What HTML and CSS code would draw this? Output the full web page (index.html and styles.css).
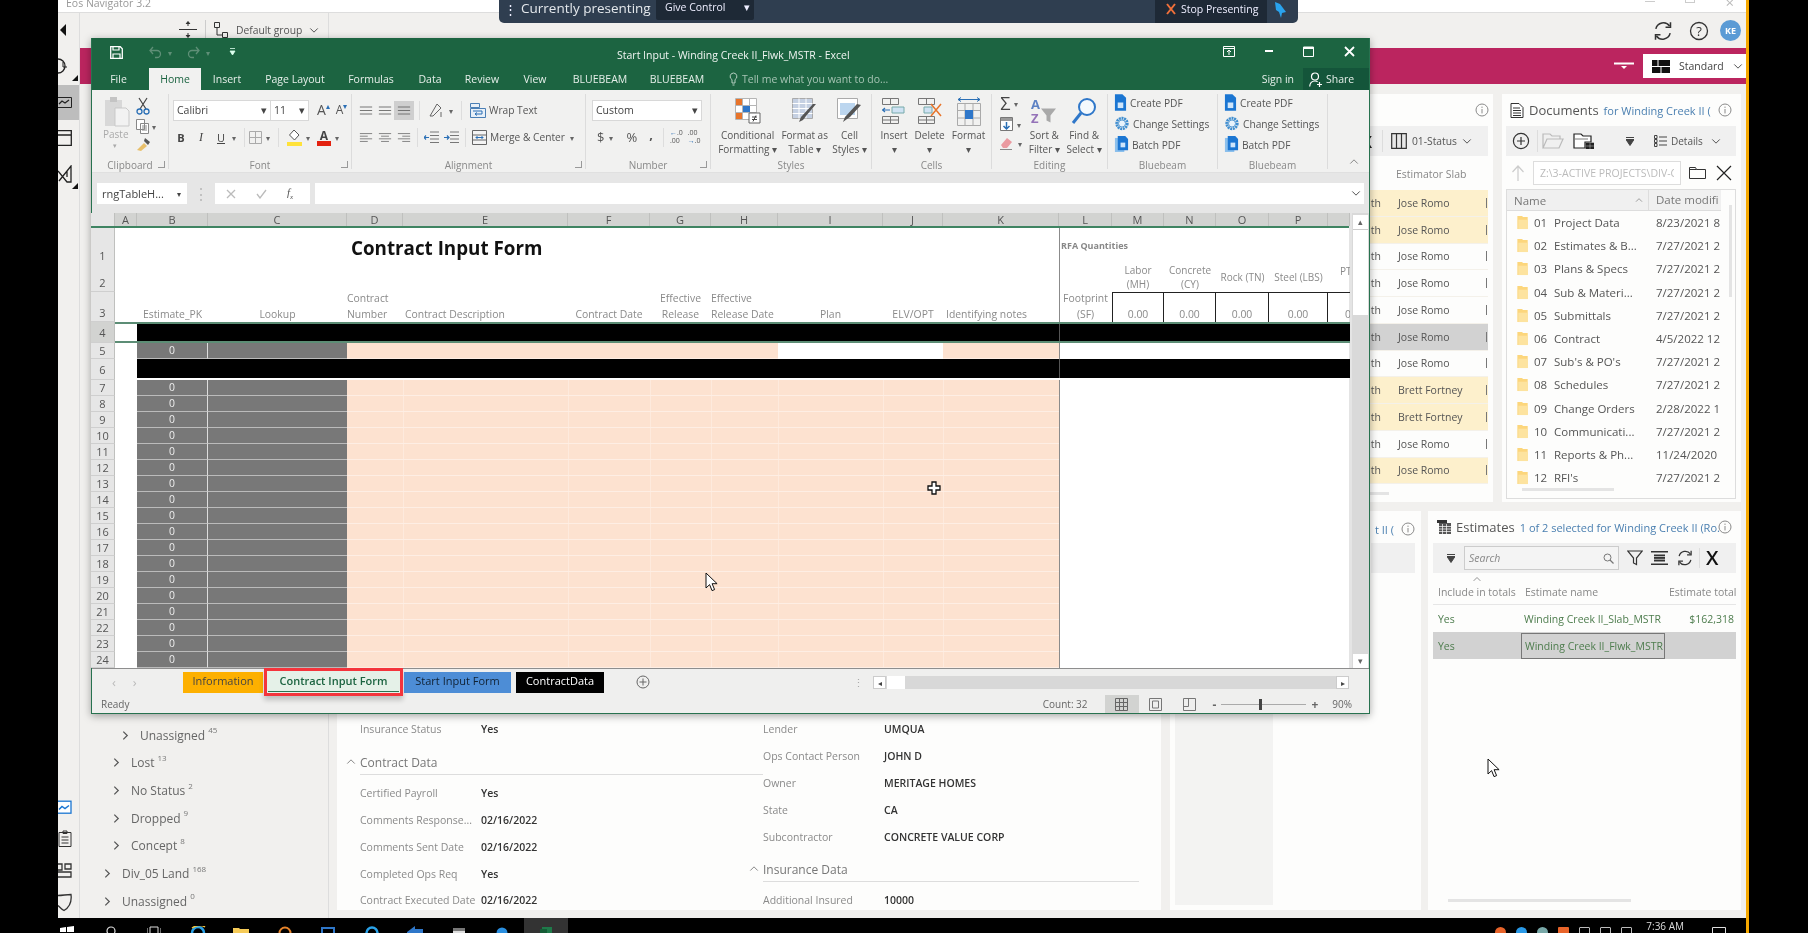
FILE: index.html
```html
<!doctype html>
<html lang="en">
<head>
<meta charset="utf-8">
<title>Eos Navigator 3.2</title>
<link rel="stylesheet" href="styles.css">
</head>
<body>
<svg class="defs" width="0" height="0">
  <symbol id="i-info" viewBox="0 0 14 14"><circle cx="7" cy="7" r="6" fill="none" stroke="#8a8a8a"/><path d="M7 6v4.4M7 3.6v1.3" stroke="#8a8a8a" fill="none"/></symbol>
  <symbol id="i-down" viewBox="0 0 12 8"><path d="M1.5 1.5 6 6l4.5-4.5" fill="none" stroke="#555" stroke-width="1.2"/></symbol>
  <symbol id="i-right" viewBox="0 0 8 12"><path d="M1.5 1.5 6 6l-4.5 4.5" fill="none" stroke="#555" stroke-width="1.4"/></symbol>
  <symbol id="i-up" viewBox="0 0 12 8"><path d="M1.5 6.5 6 2l4.5 4.5" fill="none" stroke="#888" stroke-width="1.2"/></symbol>
  <symbol id="i-folder" viewBox="0 0 12 16"><path d="M0 1h5l1 1h5v13H0z" fill="#fcd67c"/><path d="M1 5h10v10H1z" fill="#fde39f"/></symbol>
  <symbol id="i-pdf" viewBox="0 0 14 18"><path d="M1 0h8l4 4v14H1z" fill="#1b76d2"/><rect x="4" y="9" width="6" height="6" fill="#cfe6fb"/></symbol>
  <symbol id="i-gear" viewBox="0 0 18 18"><circle cx="9" cy="9" r="6" fill="none" stroke="#3f8ed0" stroke-width="3" stroke-dasharray="2.2 .8"/><circle cx="9" cy="9" r="4" fill="#e9f3fb" stroke="#3f8ed0"/></symbol>
  <symbol id="i-batch" viewBox="0 0 16 18"><rect x="1" y="2" width="10" height="15" fill="#8cc0ec"/><path d="M4 0h8l3 3v12H4z" fill="#1b76d2"/><rect x="7" y="7" width="5" height="5" fill="#cfe6fb"/></symbol>
  <symbol id="i-lines" viewBox="0 0 16 12"><path d="M1 2h14M1 6h14M1 10h14" stroke="#666" fill="none"/></symbol>
  <symbol id="i-lines-l" viewBox="0 0 16 12"><path d="M1 1.500h14M1 4.500h9M1 7.500h14M1 10.500h9" stroke="#777" fill="none"/></symbol>
  <symbol id="i-lines-c" viewBox="0 0 16 12"><path d="M1 1.500h14M3.500 4.500h9M1 7.500h14M3.500 10.500h9" stroke="#777" fill="none"/></symbol>
  <symbol id="i-lines-r" viewBox="0 0 16 12"><path d="M1 1.500h14M6 4.500h9M1 7.500h14M6 10.500h9" stroke="#777" fill="none"/></symbol>
  <symbol id="i-refresh" viewBox="0 0 20 20"><path d="M3.500 8A7 7 0 0 1 16 5.500M16.500 12A7 7 0 0 1 4 14.500" fill="none" stroke="#333" stroke-width="1.4"/><path d="M16.800 2v4.500h-4.500M3.200 18v-4.500h4.500" fill="none" stroke="#333" stroke-width="1.4"/></symbol>
  <symbol id="i-arrow" viewBox="0 0 14 21"><path d="M1 1v15l3.600-3.400 2.400 6 2.600-1-2.500-5.900h5z" fill="#fff" stroke="#111"/></symbol>
  <symbol id="i-tri" viewBox="0 0 6 6"><path d="M6 0v6H0z" fill="#111"/></symbol>
</svg>

<div class="screen">
  <div class="app">
    <header class="title-row">
      <span class="app-name">Eos Navigator 3.2</span>
      <span class="win-btns"><i></i><i class="sq"></i><b>×</b></span>
    </header>
    <div class="shell">
      <nav class="rail">
        <div class="rail-top">
          <svg class="rail-back" width="6" height="12" viewBox="0 0 6 12"><path d="M6 0v12L0 6z" fill="#111"/></svg>
          <svg class="r-clock" width="14" height="18" viewBox="0 0 14 18"><path d="M0 2a7 7 0 1 1 0 14" fill="none" stroke="#222" stroke-width="1.300"/><path d="M5 5v5h4" fill="none" stroke="#222"/></svg>
          <svg class="r-tri" width="6" height="6"><use href="#i-tri"/></svg>
          <div class="rail-on"><svg width="14" height="11" viewBox="0 0 14 11"><path d="M0 .5h13.500v10H0" fill="none" stroke="#222"/><path d="M1 7l3-3 3 2 4-3" fill="none" stroke="#222" stroke-width="1.300"/></svg></div>
          <svg class="r-win" width="14" height="16" viewBox="0 0 14 16"><path d="M0 .7h13.300v14.600H0M0 5h13" fill="none" stroke="#222" stroke-width="1.300"/></svg>
          <svg class="r-rule" width="14" height="18" viewBox="0 0 14 18"><path d="M0 6l9 11h4V1L1 16M9 6v6" fill="none" stroke="#222" stroke-width="1.300"/></svg>
          <svg class="r-tri" width="6" height="6"><use href="#i-tri"/></svg>
        </div>
        <div class="rail-bottom">
          <svg width="14" height="15" viewBox="0 0 14 14"><rect x="-1" y=".7" width="14" height="12" fill="#fff" stroke="#1b76d2" stroke-width="1.300"/><path d="M1 9l3-3 3 2 4-3" fill="none" stroke="#1b76d2" stroke-width="1.500"/></svg>
          <svg width="14" height="19" viewBox="0 0 14 18"><path d="M1 3h12v14H1zM5 1.500h4V4H5zM3.500 7.500h7M3.500 10.500h7M3.500 13.500h7" fill="none" stroke="#333"/></svg>
          <svg width="14" height="16" viewBox="0 0 14 16"><path d="M0 1h4v6H0M7 1h6v5H7zM0 9h13v5H0" fill="none" stroke="#333" stroke-width="1.300"/></svg>
          <svg width="14" height="19" viewBox="0 0 14 18"><path d="M0 2c5 0 8-1 13-1 1 8-2 13-7 16-2-1-4-3-6-5" fill="none" stroke="#333" stroke-width="1.300"/></svg>
        </div>
      </nav>

      <div class="content">
        <div class="top-bar">
          <div class="top-left">
            <svg width="20" height="22" viewBox="0 0 20 22"><path d="M1 10.500h18" stroke="#333"/><path d="M10 3v4M8 5l2-2.500L12 5M10 14v4M8 16l2 2.500 2-2.500" fill="#333" stroke="#333"/></svg>
            <span class="sep"></span>
            <svg width="16" height="18" viewBox="0 0 16 18"><path d="M1.500 1.500h5v5h-5zM9.500 11.500h5v5h-5zM4 6.500v7.500h5.500" fill="none" stroke="#333"/></svg>
            <span class="grp-name">Default group</span>
            <svg width="10" height="7"><use href="#i-down"/></svg>
          </div>
          <div class="top-right">
            <svg width="22" height="22"><use href="#i-refresh"/></svg>
            <svg width="20" height="20" viewBox="0 0 20 20"><circle cx="10" cy="10" r="8.500" fill="none" stroke="#333" stroke-width="1.300"/><text x="10" y="14.500" class="qmark">?</text></svg>
            <span class="avatar">KE</span>
          </div>
        </div>
        <div class="magenta">
          <svg width="20" height="8" viewBox="0 0 20 8"><path d="M0 1.500h20" stroke="#fff" stroke-width="2"/><path d="M7 4h6L10 7z" fill="#fff"/></svg>
          <div class="std-box">
            <svg width="18" height="13" viewBox="0 0 18 13"><path d="M0 0h5.500v6H0zM6.500 0H18v6H6.500zM0 7h8.500v6H0zM9.500 7H18v6H9.500z" fill="#111"/></svg>
            <span>Standard</span>
            <svg width="10" height="7"><use href="#i-down"/></svg>
          </div>
        </div>

        <div class="body">
          <aside class="tree">
            <div class="tree-row lvl3"><svg width="7" height="11"><use href="#i-right"/></svg><span>Unassigned</span><sup>45</sup></div>
            <div class="tree-row lvl2"><svg width="7" height="11"><use href="#i-right"/></svg><span>Lost</span><sup>13</sup></div>
            <div class="tree-row lvl2"><svg width="7" height="11"><use href="#i-right"/></svg><span>No Status</span><sup>2</sup></div>
            <div class="tree-row lvl2"><svg width="7" height="11"><use href="#i-right"/></svg><span>Dropped</span><sup>9</sup></div>
            <div class="tree-row lvl2"><svg width="7" height="11"><use href="#i-right"/></svg><span>Concept</span><sup>8</sup></div>
            <div class="tree-row lvl1"><svg width="7" height="11"><use href="#i-right"/></svg><span>Div_05 Land</span><sup>168</sup></div>
            <div class="tree-row lvl1"><svg width="7" height="11"><use href="#i-right"/></svg><span>Unassigned</span><sup>0</sup></div>
          </aside>

          <main class="details">
            <section class="det-col">
              <div class="kv"><span>Insurance Status</span><b>Yes</b></div>
              <h3 class="sect"><svg width="10" height="7"><use href="#i-up"/></svg>Contract Data</h3>
              <div class="kv"><span>Certified Payroll</span><b>Yes</b></div>
              <div class="kv"><span>Comments Response...</span><b>02/16/2022</b></div>
              <div class="kv"><span>Comments Sent Date</span><b>02/16/2022</b></div>
              <div class="kv"><span>Completed Ops Req</span><b>Yes</b></div>
              <div class="kv"><span>Contract Executed Date</span><b>02/16/2022</b></div>
            </section>
            <section class="det-col det-right">
              <div class="kv"><span>Lender</span><b>UMQUA</b></div>
              <div class="kv"><span>Ops Contact Person</span><b>JOHN D</b></div>
              <div class="kv"><span>Owner</span><b>MERITAGE HOMES</b></div>
              <div class="kv"><span>State</span><b>CA</b></div>
              <div class="kv"><span>Subcontractor</span><b>CONCRETE VALUE CORP</b></div>
              <h3 class="sect"><svg width="10" height="7"><use href="#i-up"/></svg>Insurance Data</h3>
              <div class="kv"><span>Additional Insured</span><b>10000</b></div>
            </section>
          </main>

          <div class="right">
            <div class="right-top">
              <section class="panel status">
                <div class="status-head"><svg width="14" height="14"><use href="#i-info"/></svg></div>
                <div class="status-tools">
                  <span class="x-mark">X</span><span class="sep"></span>
                  <svg width="16" height="16" viewBox="0 0 16 16"><path d="M.7.7h14.600v14.600H.7zM5.500.7v14.600M10.500.7v14.600" fill="#e8e8e8" stroke="#333" stroke-width="1.200"/></svg>
                  <span>01-Status</span>
                  <svg width="10" height="7"><use href="#i-down"/></svg>
                </div>
                <div class="status-cols"><span>Estimator Slab</span></div>
                <div class="srow hi"><i>Smith</i><span>Jose Romo</span></div>
                <div class="srow hi"><i>Smith</i><span>Jose Romo</span></div>
                <div class="srow"><i>Smith</i><span>Jose Romo</span></div>
                <div class="srow"><i>Smith</i><span>Jose Romo</span></div>
                <div class="srow"><i>Smith</i><span>Jose Romo</span></div>
                <div class="srow picked"><i>Smith</i><span>Jose Romo</span></div>
                <div class="srow"><i>Smith</i><span>Jose Romo</span></div>
                <div class="srow hi"><i>Smith</i><span>Brett Fortney</span></div>
                <div class="srow hi"><i>Smith</i><span>Brett Fortney</span></div>
                <div class="srow"><i>Smith</i><span>Jose Romo</span></div>
                <div class="srow hi"><i>Smith</i><span>Jose Romo</span></div>
                <div class="hbar status-bar"></div>
              </section>

              <section class="panel docs">
                <div class="p-head">
                  <svg width="14" height="15" viewBox="0 0 14 15"><path d="M1 .5h8l4 4v10H1z" fill="#fff" stroke="#333"/><path d="M3 5h7M3 7.500h8M3 10h8M3 12.500h8" stroke="#333"/></svg>
                  <h2>Documents</h2><em>for Winding Creek II (</em>
                  <svg class="p-info" width="14" height="14"><use href="#i-info"/></svg>
                </div>
                <div class="tools doc-tools">
                  <svg width="18" height="18" viewBox="0 0 18 18"><circle cx="9" cy="9" r="7.600" fill="none" stroke="#333" stroke-width="1.200"/><path d="M9 5v8M5 9h8" stroke="#333" stroke-width="1.200"/></svg>
                  <span class="sep"></span>
                  <svg class="t-folder" width="22" height="16" viewBox="0 0 22 16"><path d="M1 15V1h7l2 2h8v3M1 15l4-9h16l-4 9z" fill="none" stroke="#bbb" stroke-width="1.200"/></svg>
                  <svg class="t-open" width="21" height="16" viewBox="0 0 21 16"><path d="M1 15V1h7l2 2h8v6H12v6z" fill="#fff" stroke="#222" stroke-width="1.200"/><path d="M2 6h13M13 10h3.500v2.500H13zM17.500 10H21v2.500h-3.500zM13 13.500h3.500V16H13zM17.500 13.500H21V16h-3.500z" fill="#222" stroke="#222" stroke-width=".6"/></svg>
                  <svg class="t-tri" width="8" height="9" viewBox="0 0 8 9"><path d="M0 .5h8M0 2.500h8L4 8.500z" fill="#444" stroke="#444"/></svg>
                  <svg class="t-details" width="13" height="12" viewBox="0 0 13 12"><path d="M.5.500h2.500v3H.5zM.5 4.500h2.500v3H.5zM.5 8.500h2.500v3H.5zM5 2h8M5 6h8M5 10h8" fill="none" stroke="#444"/></svg>
                  <span class="t-label">Details</span>
                  <svg width="10" height="7"><use href="#i-down"/></svg>
                </div>
                <div class="path-row">
                  <svg width="14" height="16" viewBox="0 0 14 16"><path d="M7 16V1M1.500 7 7 1l5.500 6" fill="none" stroke="#ccc" stroke-width="1.200"/></svg>
                  <input class="path-input" value="Z:\3-ACTIVE PROJECTS\DIV-C" readonly>
                  <svg width="17" height="12" viewBox="0 0 17 12"><path d="M.5 11.500V.5h6l1 2h9v9zM.5 2.500h7" fill="none" stroke="#333"/></svg>
                  <svg width="16" height="16" viewBox="0 0 16 16"><path d="M1 1l14 14M15 1 1 15" stroke="#222" stroke-width="1.200"/></svg>
                </div>
                <div class="flist">
                  <div class="fhead"><span class="fname-h">Name</span><svg width="8" height="6"><use href="#i-up"/></svg><span class="fdate">Date modifi</span></div>
                  <div class="frow"><svg width="12" height="15"><use href="#i-folder"/></svg><b>01</b><span>Project Data</span><time>8/23/2021 8</time></div>
                  <div class="frow"><svg width="12" height="15"><use href="#i-folder"/></svg><b>02</b><span>Estimates &amp; B...</span><time>7/27/2021 2</time></div>
                  <div class="frow"><svg width="12" height="15"><use href="#i-folder"/></svg><b>03</b><span>Plans &amp; Specs</span><time>7/27/2021 2</time></div>
                  <div class="frow"><svg width="12" height="15"><use href="#i-folder"/></svg><b>04</b><span>Sub &amp; Materi...</span><time>7/27/2021 2</time></div>
                  <div class="frow"><svg width="12" height="15"><use href="#i-folder"/></svg><b>05</b><span>Submittals</span><time>7/27/2021 2</time></div>
                  <div class="frow"><svg width="12" height="15"><use href="#i-folder"/></svg><b>06</b><span>Contract</span><time>4/5/2022 12</time></div>
                  <div class="frow"><svg width="12" height="15"><use href="#i-folder"/></svg><b>07</b><span>Sub's &amp; PO's</span><time>7/27/2021 2</time></div>
                  <div class="frow"><svg width="12" height="15"><use href="#i-folder"/></svg><b>08</b><span>Schedules</span><time>7/27/2021 2</time></div>
                  <div class="frow"><svg width="12" height="15"><use href="#i-folder"/></svg><b>09</b><span>Change Orders</span><time>2/28/2022 1</time></div>
                  <div class="frow"><svg width="12" height="15"><use href="#i-folder"/></svg><b>10</b><span>Communicati...</span><time>7/27/2021 2</time></div>
                  <div class="frow"><svg width="12" height="15"><use href="#i-folder"/></svg><b>11</b><span>Reports &amp; Ph...</span><time>11/24/2020</time></div>
                  <div class="frow"><svg width="12" height="15"><use href="#i-folder"/></svg><b>12</b><span>RFI's</span><time>7/27/2021 2</time></div>
                  <div class="hbar doc-bar"></div>
                  <div class="vbar"></div>
                </div>
              </section>
            </div>

            <div class="right-bottom">
              <section class="panel mid">
                <div class="mid-box"></div>
                <div class="mid-side">
                  <div class="p-head"><em>t II (</em><svg class="p-info" width="14" height="14"><use href="#i-info"/></svg></div>
                  <div class="tools"></div>
                </div>
              </section>
              <section class="panel est">
                <div class="p-head">
                  <svg width="14" height="14" viewBox="0 0 14 14"><path d="M0 0h10v3H0z" fill="#333"/><path d="M2 3h12v11H2z" fill="#555"/><path d="M2 6.500h12M2 9h12M2 11.500h12M5.500 4v10M9.500 4v10" stroke="#fff" stroke-width=".7"/></svg>
                  <h2>Estimates</h2><em>1 of 2 selected for Winding Creek II (Ro.</em>
                  <svg class="p-info" width="14" height="14"><use href="#i-info"/></svg>
                </div>
                <div class="tools est-tools">
                  <svg class="t-tri2" width="8" height="9" viewBox="0 0 8 9"><path d="M0 .5h8M0 2.500h8L4 8.500z" fill="#444" stroke="#444"/></svg>
                  <label class="search"><input placeholder="Search"><svg width="11" height="11" viewBox="0 0 11 11"><circle cx="4.500" cy="4.500" r="3.500" fill="none" stroke="#777"/><path d="M7 7l3.500 3.500" stroke="#777" stroke-width="1.300"/></svg></label>
                  <svg width="16" height="16" viewBox="0 0 16 16"><path d="M.7 1h14.600L9.500 8v6.500l-3-1.500V8z" fill="none" stroke="#333" stroke-width="1.200"/></svg>
                  <svg width="17" height="14" viewBox="0 0 17 14"><path d="M0 .7h17M0 13.300h17" stroke="#333" stroke-width="1.400"/><path d="M3 3.500h11v7H3z" fill="#333"/><path d="M3 5.500h11M3 8.300h11" stroke="#eee" stroke-width=".7"/></svg>
                  <svg width="18" height="18"><use href="#i-refresh"/></svg>
                  <span class="sep"></span>
                  <span class="big-x">X</span>
                </div>
                <div class="est-head"><svg class="est-caret" width="10" height="6"><use href="#i-up"/></svg><span>Include in totals</span><span>Estimate name</span><span class="est-total">Estimate total</span></div>
                <div class="est-row"><span>Yes</span><span>Winding Creek II_Slab_MSTR</span><span class="est-total">$162,318</span></div>
                <div class="est-row on"><span>Yes</span><span class="cell-on">Winding Creek II_Flwk_MSTR</span></div>
                <div class="hbar est-bar"></div>
              </section>
            </div>
          </div>
        </div>
      </div>
    </div>

    <footer class="taskbar">
      <svg class="tk-win" width="14" height="14" viewBox="0 0 14 14"><path d="M0 2l6-1v5H0zM7 1l7-1v6H7z" fill="#fff"/></svg>
      <span class="tk"><svg width="10" height="10" viewBox="0 0 10 10"><circle cx="5" cy="5" r="4" fill="none" stroke="#ddd" stroke-width="1.200"/></svg></span>
      <span class="tk"><svg width="14" height="10" viewBox="0 0 14 10"><path d="M3 1h8v8H3zM0 2v6M14 2v6" fill="none" stroke="#ddd"/></svg></span>
      <span class="tk"><svg width="16" height="10" viewBox="0 0 16 10"><circle cx="8" cy="7" r="6" fill="none" stroke="#2aa2e8" stroke-width="2.500"/><path d="M2 2c4-3 10-3 13-1" fill="none" stroke="#f5c33c" stroke-width="1.500"/></svg></span>
      <span class="tk"><svg width="16" height="10" viewBox="0 0 16 10"><path d="M0 2h6l1 1h9v7H0z" fill="#f6cb58"/></svg></span>
      <span class="tk"><svg width="14" height="10" viewBox="0 0 14 10"><circle cx="7" cy="7" r="5.500" fill="none" stroke="#e8842a" stroke-width="2"/></svg></span>
      <span class="tk"><svg width="14" height="10" viewBox="0 0 14 10"><path d="M1 10V2h12v8" fill="none" stroke="#2f77c9" stroke-width="2"/></svg></span>
      <span class="tk"><svg width="14" height="10" viewBox="0 0 14 10"><circle cx="7" cy="7" r="5.500" fill="none" stroke="#2aa2e8" stroke-width="2.500"/></svg></span>
      <span class="tk"><svg width="16" height="10" viewBox="0 0 16 10"><path d="M0 6l8-6v3h8v7H0z" fill="#2f77c9"/></svg></span>
      <span class="tk"><svg width="14" height="10" viewBox="0 0 14 10"><path d="M1 2h12v8H1z" fill="#ddd"/><path d="M1 2h12v3H1z" fill="#777"/></svg></span>
      <span class="tk"><svg width="14" height="10" viewBox="0 0 14 10"><circle cx="7" cy="7" r="5.500" fill="#2a8fe0"/></svg></span>
      <span class="tk tk-on"><svg width="14" height="10" viewBox="0 0 14 10"><path d="M3 1h10v9H3z" fill="#1f7a4a"/><path d="M1 3h7v7H1z" fill="#155c36"/></svg></span>
      <span class="tray">
        <i class="dot orange"></i><i class="dot blue"></i><i class="dot teal"></i><i class="dot box"></i><i class="dot gray"></i><i class="dot gray"></i><i class="dot gray"></i>
        <time>7:36 AM</time>
        <svg width="14" height="8" viewBox="0 0 14 8"><path d="M.5 8V.5h13V8" fill="none" stroke="#ddd"/></svg>
      </span>
    </footer>
  </div>

  <!-- presenter strip over the shared desktop -->
  <div class="presenting">
    <span class="grip">⋮</span>
    <span class="pres-text">Currently presenting</span>
    <span class="give">Give Control<i>▾</i></span>
    <span class="stop"><svg width="10" height="12" viewBox="0 0 10 12"><path d="M1 1l8 10M9 1 1 11" stroke="#f0703a" stroke-width="2"/></svg>Stop Presenting</span>
    <svg class="pin" width="14" height="16" viewBox="0 0 14 16"><path d="M1 0l5 2 6 8-4 1-1 5-2-6-3-2z" fill="#29a3ee"/></svg>
  </div>

  <!-- Excel window -->
  <div class="xl">
    <div class="xl-title">
      <div class="qat">
        <svg width="13" height="13" viewBox="0 0 13 13"><path d="M.7.7h9.600l2 2v9.600H.7z" fill="none" stroke="#fff" stroke-width="1.300"/><path d="M3 1v3h6V1M3 12V8h7v4" fill="none" stroke="#fff" stroke-width="1.200"/></svg>
        <svg class="dim" width="13" height="13" viewBox="0 0 13 13"><path d="M4 1 1 4.500 4 8M1 4.500h7a3.500 3.500 0 0 1 0 7H6" fill="none" stroke="#5f8f77" stroke-width="1.300"/></svg>
        <span class="dim-caret">▾</span>
        <svg class="dim" width="13" height="13" viewBox="0 0 13 13"><path d="M9 1l3 3.500L9 8M12 4.500H5a3.500 3.500 0 0 0 0 7h2" fill="none" stroke="#5f8f77" stroke-width="1.300"/></svg>
        <span class="dim-caret">▾</span>
        <svg class="cust" width="7" height="8" viewBox="0 0 7 8"><path d="M1 .5h5M1 3h5L3.500 7z" fill="#dfe" stroke="#dfe" stroke-width=".8"/></svg>
      </div>
      <span class="xl-name">Start Input - Winding Creek II_Flwk_MSTR - Excel</span>
      <div class="xl-win">
        <svg width="12" height="11" viewBox="0 0 12 11"><path d="M.5.500h11v10H.5zM.5 2.500h11" fill="none" stroke="#fff"/><path d="M6 9V5M4 6l2-2 2 2" fill="none" stroke="#fff"/></svg>
        <svg width="8" height="3"><rect width="8" height="2" fill="#fff"/></svg>
        <svg width="11" height="11" viewBox="0 0 11 11"><path d="M.5 1h10v9.500H.5z" fill="none" stroke="#fff"/><path d="M0 1h11v2H0z" fill="#fff"/></svg>
        <svg width="11" height="11" viewBox="0 0 11 11"><path d="M1 1l9 9M10 1l-9 9" stroke="#fff" stroke-width="1.800"/></svg>
      </div>
    </div>
    <div class="xl-tabs">
      <span class="t-file">File</span><span class="on">Home</span><span>Insert</span><span>Page Layout</span><span>Formulas</span><span>Data</span><span>Review</span><span>View</span><span>BLUEBEAM</span><span>BLUEBEAM</span>
      <span class="tell"><svg width="9" height="15" viewBox="0 0 9 15"><path d="M4.500 1A3.500 3.500 0 0 0 3 7.600V11h3V7.600A3.500 3.500 0 0 0 4.500 1zM3.500 13h2" fill="none" stroke="#b7d1c3"/></svg>Tell me what you want to do...</span>
      <span class="signin">Sign in</span>
      <span class="share"><svg width="13" height="15" viewBox="0 0 13 15"><circle cx="6" cy="4.500" r="3.500" fill="none" stroke="#fff" stroke-width="1.200"/><path d="M.7 14.500C1 10 3 9 6 9c1 0 2 .2 2.600.7M10.500 10v5M8 12.500h5" fill="none" stroke="#fff" stroke-width="1.200"/></svg>Share</span>
    </div>

    <div class="ribbon">
      <div class="rg clip">
        <div class="rb">
          <div class="paste">
            <svg width="26" height="32" viewBox="0 0 26 32"><path d="M1 4h17v26H1z" fill="#d8d8d8"/><path d="M6 1h7v5H6z" fill="#c4c4c4"/><path d="M11 12h11l3 3v15H11z" fill="#f2f2f2" stroke="#c9c9c9"/></svg>
            <span>Paste</span><i>▾</i>
          </div>
          <div class="clip-col">
            <svg width="14" height="18" viewBox="0 0 14 18"><path d="M3 1l7 11M11 1 4 12" stroke="#444" stroke-width="1.200"/><circle cx="3.500" cy="14.500" r="2.500" fill="none" stroke="#2a6fb5" stroke-width="1.300"/><circle cx="10.500" cy="14.500" r="2.500" fill="none" stroke="#2a6fb5" stroke-width="1.300"/></svg>
            <div><svg width="13" height="15" viewBox="0 0 13 15"><path d="M.5.500h8v10h-8zM4.500 4.500h8v10h-8zM6 7h5M6 9h5M6 11h5" fill="#fff" stroke="#888"/></svg><i class="car">▾</i></div>
            <svg width="15" height="15" viewBox="0 0 15 15"><path d="M1 13l7-7 3 3-6 5z" fill="#e8bf6a"/><path d="M9 1l5 4-2 3-4-4z" fill="#555"/></svg>
          </div>
        </div>
        <div class="rl">Clipboard<span class="launch"></span></div>
      </div>

      <div class="rg font-g">
        <div class="rb col">
          <div class="rrow">
            <span class="sel fname">Calibri<i>▾</i></span><span class="sel fsize">11<i>▾</i></span>
            <span class="ga">A<sup>▴</sup></span><span class="ga small">A<sup>▾</sup></span>
          </div>
          <div class="rrow row-b">
            <b class="fbtn">B</b><i class="fbtn it">I</i><u class="fbtn">U</u><i class="car">▾</i><span class="rsep"></span>
            <svg class="b-grid" width="13" height="13" viewBox="0 0 13 13"><path d="M.5.500h12v12H.5zM6.500.5v12M.5 6.500h12" fill="none" stroke="#aaa"/></svg><i class="car">▾</i><span class="rsep"></span>
            <svg width="15" height="17" viewBox="0 0 15 17"><path d="M7 1l5 5-4.500 5L2.500 6z" fill="#fff" stroke="#555"/><path d="M0 13h15v4H0z" fill="#ffe23a"/></svg><i class="car">▾</i>
            <svg class="fcol" width="14" height="17" viewBox="0 0 14 17"><text x="7" y="11" class="a-red">A</text><path d="M0 12h14v5H0z" fill="#e3210f"/></svg><i class="car">▾</i>
          </div>
        </div>
        <div class="rl">Font<span class="launch"></span></div>
      </div>

      <div class="rg align-g">
        <div class="rb col">
          <div class="rrow">
            <svg width="14" height="11"><use href="#i-lines"/></svg>
            <svg width="14" height="11"><use href="#i-lines"/></svg>
            <span class="a-on"><svg width="14" height="11"><use href="#i-lines"/></svg></span>
            <span class="rsep"></span>
            <svg width="16" height="16" viewBox="0 0 16 16"><path d="M2 14 9 2l4 4-8 8zM13 10v5" fill="none" stroke="#666"/></svg><i class="car">▾</i>
            <span class="rsep"></span>
            <span class="wrap"><svg width="16" height="15" viewBox="0 0 16 15"><path d="M.5.500h9v4h-9zM.5 5.500h15v9H.5z" fill="#e8f0f8" stroke="#4b7fb5"/><path d="M3 8h9v3H5M7 9.500 5 11l2 1.500" fill="none" stroke="#2a6fb5"/></svg>Wrap Text</span>
          </div>
          <div class="rrow row-b">
            <svg width="14" height="11"><use href="#i-lines-l"/></svg>
            <svg width="14" height="11"><use href="#i-lines-c"/></svg>
            <svg width="14" height="11"><use href="#i-lines-r"/></svg>
            <span class="rsep"></span>
            <svg width="15" height="13" viewBox="0 0 15 13"><path d="M6 1h9M6 4.500h9M6 8h9M6 11.500h9" stroke="#777"/><path d="M0 6.500h5M2 4.500l-2 2 2 2" fill="none" stroke="#2a6fb5" stroke-width="1.200"/></svg>
            <svg width="15" height="13" viewBox="0 0 15 13"><path d="M6 1h9M6 4.500h9M6 8h9M6 11.500h9" stroke="#777"/><path d="M0 6.500h5M3 4.500l2 2-2 2" fill="none" stroke="#2a6fb5" stroke-width="1.200"/></svg>
            <span class="rsep"></span>
            <span class="wrap"><svg width="15" height="15" viewBox="0 0 15 15"><path d="M.5.500h14v14H.5zM.5 5h14M.5 10h14" fill="#f4f4f4" stroke="#666"/><path d="M4 7.500h7M5.500 6 4 7.500 5.500 9M9.500 6 11 7.500 9.500 9" fill="none" stroke="#2a6fb5"/></svg>Merge &amp; Center</span><i class="car">▾</i>
          </div>
        </div>
        <div class="rl">Alignment<span class="launch"></span></div>
      </div>

      <div class="rg num-g">
        <div class="rb col">
          <div class="rrow"><span class="sel numfmt">Custom<i>▾</i></span></div>
          <div class="rrow row-b num-row">
            <span class="dollar">$</span><i class="car">▾</i><span class="pct">%</span><span class="comma">,</span><span class="rsep"></span>
            <span class="dec"><em>←</em>.0<br>.00</span><span class="dec">.00<br><em>→</em>.0</span>
          </div>
        </div>
        <div class="rl">Number<span class="launch"></span></div>
      </div>

      <div class="rg styles-g">
        <div class="rb big3">
          <div class="bigb"><svg width="26" height="26" viewBox="0 0 26 26"><path d="M.5.500h21v21H.5zM.5 7.500h21M.5 14.500h21M7.500.5v21M14.500.5v21" fill="#fff" stroke="#b5b5b5"/><path d="M1 1h6v6H1z" fill="#e8742a"/><path d="M8 8h7v6H8z" fill="#2f77c9"/><path d="M1 15h6v6H1z" fill="#e8742a"/><path d="M14 15h11v10H14z" fill="#fff" stroke="#666"/><path d="M17 19h5M17 21.500h5M21 17.500l-3 6" stroke="#444"/></svg><span>Conditional<br>Formatting <i>▾</i></span></div>
          <div class="bigb"><svg width="26" height="26" viewBox="0 0 26 26"><path d="M.5.500h20v20H.5z" fill="#c5d0e2" stroke="#aaa"/><path d="M.5 5.500h20M.5 10.500h20M.5 15.500h20M7 .5v20M14 .5v20" stroke="#fff"/><path d="M24 6l-10 12-3 4-4 2 2-5 12-13z" fill="#555"/></svg><span>Format as<br>Table <i>▾</i></span></div>
          <div class="bigb"><svg width="26" height="26" viewBox="0 0 26 26"><path d="M.5.500h20v20H.5z" fill="#fff" stroke="#aaa"/><path d="M3 5h15v12H3z" fill="#bcd6ef"/><path d="M24 7 13 19l-3 2-4 3 2-5 12-13z" fill="#555"/></svg><span>Cell<br>Styles <i>▾</i></span></div>
        </div>
        <div class="rl">Styles</div>
      </div>

      <div class="rg cells-g">
        <div class="rb big3">
          <div class="bigb"><svg width="24" height="26" viewBox="0 0 24 26"><path d="M.5.500h16v6H.5zM.5 18.500h16v7H.5zM8.500.5v6M8.500 18.500v7M.5 22h16" fill="none" stroke="#777"/><path d="M10 9h12v6H10z" fill="#cfe2f3" stroke="#7aa"/><path d="M0 12h8M3 10 .5 12 3 14" fill="none" stroke="#2a6fb5" stroke-width="1.200"/></svg><span>Insert<br><i>▾</i></span></div>
          <div class="bigb"><svg width="24" height="26" viewBox="0 0 24 26"><path d="M.5.500h16v6H.5zM.5 18.500h16v7H.5zM8.500.5v6M8.500 18.500v7M.5 22h16" fill="none" stroke="#777"/><path d="M6 9h8v6H6z" fill="#cfe2f3" stroke="#7aa"/><path d="M13 6l10 12M23 6 13 18" stroke="#e8742a" stroke-width="1.500"/></svg><span>Delete<br><i>▾</i></span></div>
          <div class="bigb"><svg width="24" height="30" viewBox="0 0 24 30"><path d="M1 3.500h22M1 3.500l3-2M1 3.500l3 2M23 3.500l-3-2M23 3.500l-3 2" fill="none" stroke="#2a6fb5"/><path d="M.5 7.500h23v22H.5zM.5 14.500h23M.5 22h23M8 7.500v22M16 7.500v22" fill="none" stroke="#aaa"/><path d="M8 14h8v9H8z" fill="#2f77c9"/></svg><span>Format<br><i>▾</i></span></div>
        </div>
        <div class="rl">Cells</div>
      </div>

      <div class="rg edit-g">
        <div class="rb big3">
          <div class="edit-col">
            <div><span class="sigma">Σ</span><i class="car">▾</i></div>
            <div><svg width="13" height="14" viewBox="0 0 13 14"><path d="M.5.500h12v13H.5z" fill="#fff" stroke="#777"/><path d="M1 1h11v3H1z" fill="#999"/><path d="M6.500 5v7M3.500 9l3 3 3-3" fill="none" stroke="#2a6fb5" stroke-width="1.500"/></svg><i class="car">▾</i></div>
            <div><svg width="14" height="13" viewBox="0 0 14 13"><path d="M1 8l6-7 5 4-5 6H3z" fill="#ea9aa0"/><path d="M0 12.500h12" stroke="#888"/></svg><i class="car">▾</i></div>
          </div>
          <div class="bigb"><svg width="26" height="27" viewBox="0 0 26 27"><text x="0" y="11" class="az a">A</text><text x="0" y="25" class="az z">Z</text><path d="M10 11h15l-5.500 7v7l-4-2v-5z" fill="#a9a9a9"/></svg><span>Sort &amp;<br>Filter <i>▾</i></span></div>
          <div class="bigb"><svg width="26" height="28" viewBox="0 0 26 28"><circle cx="16" cy="10" r="8" fill="#f4f9fd" stroke="#2f77c9" stroke-width="2"/><path d="M10 16 2 26" stroke="#2f77c9" stroke-width="3"/></svg><span>Find &amp;<br>Select <i>▾</i></span></div>
        </div>
        <div class="rl">Editing</div>
      </div>

      <div class="rg bb-g">
        <div class="rb col bb">
          <div><svg width="13" height="17"><use href="#i-pdf"/></svg>Create PDF</div>
          <div><svg width="16" height="17"><use href="#i-gear"/></svg>Change Settings</div>
          <div><svg width="15" height="17"><use href="#i-batch"/></svg>Batch PDF</div>
        </div>
        <div class="rl">Bluebeam</div>
      </div>
      <div class="rg bb-g">
        <div class="rb col bb">
          <div><svg width="13" height="17"><use href="#i-pdf"/></svg>Create PDF</div>
          <div><svg width="16" height="17"><use href="#i-gear"/></svg>Change Settings</div>
          <div><svg width="15" height="17"><use href="#i-batch"/></svg>Batch PDF</div>
        </div>
        <div class="rl">Bluebeam</div>
      </div>
      <svg class="collapse" width="10" height="7"><use href="#i-up"/></svg>
    </div>

    <div class="fbar">
      <span class="namebox">rngTableH...<i>▾</i></span>
      <span class="fdots">⋮</span>
      <span class="fxbox">
        <svg width="10" height="10" viewBox="0 0 10 10"><path d="M1 1l8 8M9 1 1 9" stroke="#bbb" stroke-width="1.300"/></svg>
        <svg width="11" height="10" viewBox="0 0 11 10"><path d="M1 5l3 4 6-8" fill="none" stroke="#bbb" stroke-width="1.300"/></svg>
        <em>f<sub>x</sub></em>
      </span>
      <span class="finput"><svg width="10" height="7"><use href="#i-down"/></svg></span>
    </div>

    <div class="sheet-wrap">
      <div class="sheet">
        <div class="colh">
          <span class="corner"></span>
          <span>A</span><span>B</span><span>C</span><span>D</span><span>E</span><span>F</span><span>G</span><span>H</span><span>I</span><span>J</span><span>K</span><span>L</span><span>M</span><span>N</span><span>O</span><span>P</span><span></span>
        </div>
        <div class="row r1"><span class="rh">1</span><span class="sheet-title">Contract Input Form</span><span class="rfa">RFA Quantities</span></div>
        <div class="row r2"><span class="rh">2</span>
          <span class="hc ll c-m">Labor<br>(MH)</span><span class="hc ll c-n">Concrete<br>(CY)</span><span class="hc ll c-o mid-t">Rock (TN)</span><span class="hc ll c-p mid-t">Steel (LBS)</span><span class="hc ll c-q">PT</span>
        </div>
        <div class="row r3"><span class="rh">3</span>
          <span class="hc c-b">Estimate_PK</span><span class="hc c-c">Lookup</span><span class="hc c-d left">Contract<br>Number</span><span class="hc c-e left">Contract Description</span><span class="hc c-f">Contract Date</span><span class="hc c-g">Effective<br>Release</span><span class="hc c-h left">Effective<br>Release Date</span><span class="hc c-i">Plan</span><span class="hc c-j">ELV/OPT</span><span class="hc c-k left">Identifying notes</span><span class="hc c-l">Footprint<br>(SF)</span>
          <span class="qty c-m">0.00</span><span class="qty c-n">0.00</span><span class="qty c-o">0.00</span><span class="qty c-p">0.00</span><span class="qty c-q">0.00</span>
        </div>
        <div class="row r4"><span class="rh on">4</span><span class="sel-row"><span class="black"></span></span></div>
        <div class="row r5"><span class="rh">5</span><span class="pk">0</span><span class="lk"></span><span class="peach p5a"></span><span class="peach p5b"></span><span class="vl"></span></div>
        <div class="row r6"><span class="rh">6</span><span class="black black6"></span></div>
        <div class="row"><span class="rh">7</span><span class="pk">0</span><span class="lk"></span><span class="peach pall"></span><span class="vl"></span></div>
        <div class="row"><span class="rh">8</span><span class="pk">0</span><span class="lk"></span><span class="peach pall"></span><span class="vl"></span></div>
        <div class="row"><span class="rh">9</span><span class="pk">0</span><span class="lk"></span><span class="peach pall"></span><span class="vl"></span></div>
        <div class="row"><span class="rh">10</span><span class="pk">0</span><span class="lk"></span><span class="peach pall"></span><span class="vl"></span></div>
        <div class="row"><span class="rh">11</span><span class="pk">0</span><span class="lk"></span><span class="peach pall"></span><span class="vl"></span></div>
        <div class="row"><span class="rh">12</span><span class="pk">0</span><span class="lk"></span><span class="peach pall"></span><span class="vl"></span></div>
        <div class="row"><span class="rh">13</span><span class="pk">0</span><span class="lk"></span><span class="peach pall"></span><span class="vl"></span></div>
        <div class="row"><span class="rh">14</span><span class="pk">0</span><span class="lk"></span><span class="peach pall"></span><span class="vl"></span></div>
        <div class="row"><span class="rh">15</span><span class="pk">0</span><span class="lk"></span><span class="peach pall"></span><span class="vl"></span></div>
        <div class="row"><span class="rh">16</span><span class="pk">0</span><span class="lk"></span><span class="peach pall"></span><span class="vl"></span></div>
        <div class="row"><span class="rh">17</span><span class="pk">0</span><span class="lk"></span><span class="peach pall"></span><span class="vl"></span></div>
        <div class="row"><span class="rh">18</span><span class="pk">0</span><span class="lk"></span><span class="peach pall"></span><span class="vl"></span></div>
        <div class="row"><span class="rh">19</span><span class="pk">0</span><span class="lk"></span><span class="peach pall"></span><span class="vl"></span></div>
        <div class="row"><span class="rh">20</span><span class="pk">0</span><span class="lk"></span><span class="peach pall"></span><span class="vl"></span></div>
        <div class="row"><span class="rh">21</span><span class="pk">0</span><span class="lk"></span><span class="peach pall"></span><span class="vl"></span></div>
        <div class="row"><span class="rh">22</span><span class="pk">0</span><span class="lk"></span><span class="peach pall"></span><span class="vl"></span></div>
        <div class="row"><span class="rh">23</span><span class="pk">0</span><span class="lk"></span><span class="peach pall"></span><span class="vl"></span></div>
        <div class="row"><span class="rh">24</span><span class="pk">0</span><span class="lk"></span><span class="peach pall"></span><span class="vl"></span></div>
      </div>
      <div class="vscroll"><span class="va">▴</span><span class="vthumb"></span><span class="vfill"></span><span class="va">▾</span></div>
    </div>

    <div class="sheet-tabs">
      <span class="nav-arrows">‹&nbsp;&nbsp;&nbsp;&nbsp;&nbsp;›</span>
      <span class="stab t-info">Information</span>
      <span class="stab t-cur">Contract Input Form</span>
      <span class="stab t-start">Start Input Form</span>
      <span class="stab t-data">ContractData</span>
      <svg class="t-add" width="14" height="14" viewBox="0 0 14 14"><circle cx="7" cy="7" r="6" fill="none" stroke="#666"/><path d="M7 3.500v7M3.500 7h7" stroke="#666"/></svg>
      <span class="hdots">⋮</span>
      <span class="hscroll"><span class="ha">◂</span><span class="hthumb"></span><span class="htrack"></span><span class="ha">▸</span></span>
    </div>
    <div class="xl-status">
      <span class="ready">Ready</span>
      <span class="count">Count: 32</span>
      <span class="view on"><svg width="13" height="13" viewBox="0 0 13 13"><path d="M.5.500h12v12H.5zM4.500.5v12M8.500.5v12M.5 4.500h12M.5 8.500h12" fill="none" stroke="#666"/></svg></span>
      <span class="view"><svg width="13" height="13" viewBox="0 0 13 13"><path d="M.5.500h12v12H.5zM3.500 3h6v7h-6z" fill="none" stroke="#777"/></svg></span>
      <span class="view"><svg width="13" height="13" viewBox="0 0 13 13"><path d="M.5.500h12v12H.5zM.5 8.500h5v-8" fill="none" stroke="#777"/></svg></span>
      <span class="zoom"><b>-</b><span class="zline"><i></i></span><b>+</b></span>
      <span class="pctz">90%</span>
    </div>
  </div>

  <div class="cur-arrow a1"><svg width="14" height="21"><use href="#i-arrow"/></svg></div>
  <div class="cur-arrow a2"><svg width="14" height="21"><use href="#i-arrow"/></svg></div>
  <svg class="cur-cross" width="14" height="14" viewBox="0 0 14 14"><path d="M5 1h4v4h4v4H9v4H5V9H1V5h4z" fill="#fff" stroke="#111" stroke-width="1.300"/></svg>
</div>
</body>
</html>
```

FILE: styles.css
```css
:root {
    --ui: "Open Sans", "Noto Sans", sans-serif;
    --green: #1c6441;
    --panel: #fdfdfc;
    --page: #f1f0ee;
    --cols: 24px 22px 71px 139px 56px 165px 82px 61px 67px 105px 60px 116px 53px 52px 52px 53px 59px 22px;
}

* {
    box-sizing: border-box;
}

html, body {
    margin: 0;
    padding: 0;
    background: #000;
}

.defs {
    position: absolute;
}

i {
    font-style: normal;
}

svg {
    flex: none;
    display: block;
}

.screen {
    position: relative;
    width: 1808px;
    height: 933px;
    overflow: hidden;
    background: #000;
    padding-left: 58px;
    font-family: var(--ui);
    color: #444;
    filter: blur(0.35px);
}

/* the app behind */
.app {
    width: 1691px;
    height: 933px;
    display: flex;
    flex-direction: column;
    background: var(--page);
    border-right: 3px solid #f6a800;
}

.shell {
    flex: 1;
    min-height: 0;
    display: flex;
}

.content {
    flex: 1;
    min-width: 0;
    display: flex;
    flex-direction: column;
}

.title-row {
    height: 13px;
    flex: none;
    background: #fff;
    border-bottom: 1px solid #ddd;
    display: flex;
    justify-content: space-between;
    overflow: hidden;
    font-size: 10.5px;
    color: #999;
    line-height: 6px;
    padding-left: 8px;
}

.win-btns {
    display: flex;
    gap: 30px;
    padding-right: 12px;
}

.win-btns i {
    width: 10px;
    height: 1px;
    background: #ccc;
    margin-top: 1px;
}

.win-btns i.sq {
    height: 3px;
    background: none;
    border: 1px solid #ccc;
    border-top: 0;
    margin-top: 0;
}

.win-btns b {
    font-weight: 400;
    font-size: 15px;
    line-height: 4px;
    color: #bbb;
}

.top-bar {
    height: 35px;
    flex: none;
    display: flex;
    justify-content: space-between;
}

.top-left {
    display: flex;
    align-items: center;
    gap: 7px;
    width: 249px;
    padding-left: 98px;
    padding-bottom: 1px;
    border-right: 1px solid #ddd;
    font-size: 10.3px;
    color: #555;
}

.top-left .sep {
    width: 1px;
    height: 20px;
    background: #ccc;
}

.top-right {
    display: flex;
    align-items: center;
    gap: 15px;
    padding-right: 5px;
}

.top-right .avatar {
    margin-left: -4px;
}

.qmark {
    font: 13px "Open Sans", sans-serif;
    text-anchor: middle;
    fill: #333;
}

.avatar {
    width: 21px;
    height: 21px;
    border-radius: 50%;
    background: #5b9bd5;
    color: #fff;
    font-size: 9px;
    font-weight: 700;
    text-align: center;
    line-height: 21px;
}

.magenta {
    height: 36px;
    flex: none;
    background: #bb255f;
    display: flex;
    justify-content: flex-end;
    align-items: center;
    gap: 9px;
}

.std-box {
    width: 103px;
    height: 24px;
    background: #fff;
    display: flex;
    align-items: center;
    gap: 9px;
    padding-left: 9px;
    font-size: 10.5px;
    color: #444;
}

.body {
    flex: 1;
    min-height: 0;
    display: flex;
}

.rail {
    width: 22px;
    flex: none;
    display: flex;
    flex-direction: column;
    justify-content: space-between;
    overflow: hidden;
    border-right: 1px solid #ddd;
    background: var(--page);
}

.rail-top {
    display: flex;
    flex-direction: column;
    padding-top: 11px;
}

.rail-back {
    margin: 0 0 21px 2px;
}

.r-tri {
    align-self: flex-end;
    margin-right: 1px;
}

.rail-on {
    height: 35px;
    margin-top: 4px;
    background: #bdbdbd;
    display: flex;
    align-items: center;
}

.r-win {
    margin-top: 10px;
}

.r-rule {
    margin-top: 19px;
}

.rail-bottom {
    display: flex;
    flex-direction: column;
    gap: 14.500px;
    padding-bottom: 6px;
}

.tree {
    width: 249px;
    flex: none;
    display: flex;
    flex-direction: column;
    justify-content: flex-end;
    border-right: 1px solid #ddd;
    padding-bottom: 3px;
}

.tree-row {
    height: 27.7px;
    display: flex;
    align-items: center;
    font-size: 12px;
    color: #666;
}

.tree-row svg {
    margin-right: 11px;
}

.tree-row sup {
    font-size: 8px;
    margin-left: 3px;
    align-self: flex-start;
    margin-top: 4px;
    line-height: 10px;
    color: #777;
}

.lvl1 { padding-left: 24px; }
.lvl2 { padding-left: 33px; }
.lvl3 { padding-left: 42px; }

.details {
    width: 824px;
    flex: none;
    margin: 0 0 8px 8px;
    background: var(--panel);
    padding: 632px 0 0 23px;
    display: flex;
    font-size: 10.5px;
}

.det-col {
    width: 403px;
    flex: none;
}

.det-col.det-right {
    width: 376px;
}

.kv {
    display: grid;
    grid-template-columns: 121px 1fr;
    height: 26.8px;
    align-items: center;
}

.kv span {
    color: #8a8a8a;
}

.kv b {
    font-weight: 600;
    color: #333;
}

.sect {
    position: relative;
    margin: 8px 0 5px;
    height: 24px;
    border-bottom: 1px solid #ddd;
    font-size: 12px;
    font-weight: 400;
    color: #777;
    line-height: 23px;
}

.sect svg {
    position: absolute;
    left: -14px;
    top: 7px;
}

.det-right .sect {
    margin: 8px 0 5px;
}

.right {
    flex: 1;
    min-width: 0;
    margin-left: 9px;
    margin-top: 10px;
    margin-right: 5px;
    display: flex;
    flex-direction: column;
    gap: 9px;
    margin-bottom: 8px;
}

.panel {
    background: var(--panel);
    min-width: 0;
}

.right-top {
    height: 408px;
    flex: none;
    display: flex;
    gap: 9px;
}

.right-bottom {
    flex: 1;
    display: flex;
    gap: 7px;
    min-height: 0;
}

.status {
    width: 323px;
    flex: none;
    position: relative;
    font-size: 10.5px;
}

.status-head {
    height: 32px;
    display: flex;
    justify-content: flex-end;
    align-items: center;
    padding-right: 4px;
}

.status-tools {
    height: 30px;
    width: 318px;
    background: #f0f0f0;
    display: flex;
    align-items: center;
    justify-content: flex-end;
    gap: 5px;
    padding-right: 16px;
    font-size: 10.3px;
    color: #555;
}

.status-tools .sep {
    width: 1px;
    height: 22px;
    background: #ddd;
    margin: 0 3px 0 5px;
}

.x-mark {
    color: #222;
    font-size: 17px;
    font-weight: 600;
}

.status-cols {
    height: 34px;
    display: flex;
    align-items: center;
    padding-left: 226px;
    padding-top: 2px;
    color: #888;
}

.srow {
    width: 318px;
    height: 26.75px;
    display: flex;
    align-items: center;
    border-bottom: 1px solid #f4f1ea;
    color: #555;
}

.srow::after {
    content: "";
    width: 1px;
    height: 10px;
    background: #777;
    margin-left: auto;
    margin-right: 1px;
}

.srow i {
    width: 211px;
    text-align: right;
}

.srow span {
    margin-left: 17px;
}

.srow.hi {
    background: #fdf0cc;
}

.srow.picked {
    background: #d2d2d2;
}

.hbar {
    position: absolute;
    height: 3px;
    background: #e4e4e4;
}

.status-bar {
    left: 199px;
    width: 20px;
    bottom: 7px;
}

.docs {
    flex: 1;
    display: flex;
    flex-direction: column;
    padding: 0 5px 3px 4px;
}

.p-head {
    height: 32px;
    display: flex;
    align-items: center;
    gap: 5px;
    padding-left: 4px;
    position: relative;
}

.p-head h2 {
    margin: 0;
    font-size: 13px;
    font-weight: 400;
    color: #555;
}

.p-head em {
    font-style: normal;
    font-size: 11px;
    color: #4a7fb0;
    white-space: nowrap;
}

.p-info {
    position: absolute;
    right: 4px;
    top: 9px;
}

.tools {
    height: 30px;
    background: #f0f0f0;
    display: flex;
    align-items: center;
    font-size: 11px;
    color: #555;
}

.tools .sep {
    width: 1px;
    height: 22px;
    background: #ddd;
}

.doc-tools {
    gap: 7px;
    padding-left: 6px;
}

.t-folder { margin-left: -3px; }
.t-open { margin-left: 2px; }
.t-tri { margin-left: 25px; }
.t-details { margin-left: 13px; margin-right: -3px; }
.t-label { margin-right: 1px; font-size: 10px; }

.path-row {
    height: 33px;
    display: flex;
    align-items: center;
    gap: 8px;
    padding-left: 5px;
}

.path-input {
    width: 148px;
    height: 24px;
    border: 1px solid #ddd;
    background: #fff;
    padding: 0 6px;
    font: 10.5px var(--ui);
    color: #bbb;
}

.path-row > svg:last-child {
    margin-left: 2px;
}

.flist {
    flex: 1;
    position: relative;
    border: 1px solid #ddd;
    min-height: 0;
    overflow: hidden;
}

.fhead {
    height: 21px;
    background: #f0f0f0;
    border-bottom: 1px solid #ddd;
    display: flex;
    align-items: center;
    padding-left: 7px;
    font-size: 11.5px;
    color: #777;
    margin-right: 14px;
    white-space: nowrap;
    overflow: hidden;
}

.fname-h {
    width: 121px;
    flex: none;
}

.fdate {
    margin-left: 5px;
    padding-left: 7px;
    line-height: 20px;
    border-left: 1px solid #ddd;
}

.frow {
    height: 23.2px;
    display: flex;
    align-items: center;
    padding-left: 10px;
    font-size: 11.5px;
    color: #555;
    white-space: nowrap;
}

.frow b {
    font-weight: 400;
    margin-left: 5px;
    width: 20px;
}

.frow span {
    width: 102px;
}

.doc-bar {
    left: 15px;
    width: 92px;
    bottom: 7px;
}

.vbar {
    position: absolute;
    right: 3px;
    top: 15px;
    width: 3px;
    height: 92px;
    background: #e4e4e4;
}

.mid {
    width: 251px;
    flex: none;
    padding: 5px 0 5px 5px;
    display: flex;
    justify-content: space-between;
}

.mid-box {
    width: 98px;
    background: #f3f3f2;
}

.mid-side {
    width: 50px;
}

.mid .tools {
    margin-top: 0;
    margin-right: 6px;
}

.mid .p-head {
    height: 27px;
}

.mid .p-info {
    top: 6px;
    right: 6px;
}

.est {
    flex: 1;
    position: relative;
    display: flex;
    flex-direction: column;
    padding: 0 5px 0 5px;
}

.est-tools {
    gap: 8px;
    padding-left: 14px;
}

.t-tri2 {
    margin-right: 1px;
}

.search {
    width: 155px;
    height: 24px;
    background: #f4f4f4;
    border: 1px solid #ccc;
    display: flex;
    align-items: center;
    padding-right: 4px;
}

.search input {
    flex: 1;
    min-width: 0;
    border: 0;
    background: none;
    padding: 0 4px;
    font: italic 10.5px var(--ui);
    outline: 0;
}

.search input::placeholder {
    color: #888;
}

.est-tools .sep {
    height: 20px;
    margin: 0 -2px 0 -3px;
}

.big-x {
    font-size: 20px;
    font-weight: 600;
    color: #111;
    line-height: 20px;
}

.est-head {
    position: relative;
    height: 32px;
    display: grid;
    grid-template-columns: 87px 144px 1fr;
    align-items: end;
    padding-left: 5px;
    padding-bottom: 5px;
    border-bottom: 1px solid #e6e6e6;
    font-size: 10.5px;
    color: #888;
}

.est-caret {
    position: absolute;
    left: 39px;
    top: 3px;
}

.est-head .est-total, .est-row .est-total {
    text-align: right;
    padding-right: 2px;
    white-space: nowrap;
    overflow: hidden;
}

.est-row {
    height: 27px;
    display: grid;
    grid-template-columns: 83px 144px 1fr;
    align-items: center;
    padding-left: 5px;
    font-size: 10.5px;
    color: #4e7d4e;
}

.est-row.on {
    background: #d2d2d2;
}

.cell-on {
    height: 26px;
    line-height: 24px;
    padding-left: 3px;
    border: 1px solid #777;
    margin-left: 0;
}

.est-row > span:nth-child(2) {
    padding-left: 3px;
}

.est-bar {
    left: 20px;
    width: 183px;
    bottom: 8px;
}

.taskbar {
    height: 15px;
    flex: none;
    background: #000;
    display: flex;
    overflow: hidden;
    align-items: flex-start;
    padding-top: 8px;
}

.tk-win {
    margin: 0 15px 0 2px;
}

.tk {
    width: 43.5px;
    height: 15px;
    margin-top: -8px;
    padding-top: 8px;
    flex: none;
    display: flex;
    justify-content: center;
}

.tk-on {
    background: #333;
}

.tray {
    margin-left: auto;
    display: flex;
    align-items: flex-start;
    gap: 10px;
    margin-top: -3px;
    padding-right: 20px;
    color: #ddd;
    font-size: 10px;
    line-height: 11px;
}

.tray time {
    margin: -2px 18px 0 4px;
}

.tray svg {
    margin-top: 4px;
}

.dot {
    width: 11px;
    height: 11px;
    border-radius: 50%;
    margin-top: 4px;
}

.dot.orange { background: #e8642a; }
.dot.blue { background: #2a9ae8; }
.dot.teal { background: #78a8a8; }
.dot.box { background: #e8642a; border-radius: 1px; }
.dot.gray { border: 1px solid #bbb; border-radius: 1px; }

/* overlays: the presenter strip, the Excel window, the pointers */
.presenting {
    position: absolute;
    left: 499px;
    top: 0;
    width: 799px;
    height: 23px;
    background: #2f3e50;
    border-radius: 0 0 5px 5px;
    display: flex;
    align-items: center;
    color: #eef;
}

.grip {
    width: 22px;
    text-align: center;
    font-size: 13px;
    padding-bottom: 5px;
}

.pres-text {
    width: 135px;
    font-size: 13.5px;
    color: #e4e8ec;
    padding-bottom: 7px;
}

.give {
    width: 98px;
    height: 20px;
    align-self: flex-start;
    background: #1e2936;
    font-size: 10.5px;
    line-height: 15px;
    padding-left: 9px;
    display: flex;
    justify-content: space-between;
    padding-right: 4px;
    border-radius: 0 0 2px 2px;
}

.stop {
    margin-left: auto;
    width: 112px;
    height: 23px;
    background: #1e2936;
    display: flex;
    align-items: center;
    gap: 5px;
    padding-left: 11px;
    font-size: 10.5px;
    padding-bottom: 6px;
}

.pin {
    margin: 0 10px 4px 7px;
}

.xl {
    position: absolute;
    left: 91px;
    top: 38px;
    width: 1279px;
    height: 676px;
    display: flex;
    flex-direction: column;
    background: #f1f1f0;
    border: 1.5px solid #27724f;
    border-top: 0;
    box-shadow: 0 2px 8px rgba(0, 0, 0, 0.35);
}

.xl-title {
    height: 30px;
    flex: none;
    background: var(--green);
    position: relative;
    display: flex;
    justify-content: space-between;
    align-items: center;
    padding: 0 14px 0 18px;
}

.qat {
    display: flex;
    align-items: center;
    gap: 6px;
    margin-top: -2px;
}

.qat .dim:nth-child(2) {
    margin-left: 20px;
}

.dim-caret {
    font-size: 8px;
    color: #5f8f77;
    margin-right: 9px;
}

.cust {
    margin-left: 4px;
}

.xl-name {
    position: absolute;
    left: 525px;
    top: 10px;
    color: #f0f5f2;
    font-size: 10.5px;
    white-space: nowrap;
}

.xl-win {
    display: flex;
    align-items: center;
    gap: 30px;
    margin-top: -3px;
}

.xl-tabs {
    height: 22px;
    flex: none;
    background: var(--green);
    display: grid;
    grid-template-columns: 57px 52px 52px 84px 68px 50px 54px 52px 78px 76px 1fr auto auto;
    color: #e6efea;
    font-size: 10.500px;
    line-height: 23px;
    text-align: center;
}

.t-file {
    padding-right: 4px;
}

.xl-tabs .on {
    background: #f1f1f0;
    color: #1c6441;
    line-height: 22px;
}

.tell {
    display: flex;
    align-items: center;
    gap: 4px;
    padding-left: 14px;
    color: #a6c4b4;
    text-align: left;
}

.signin {
    padding-right: 9px;
}

.share {
    width: 66px;
    background: #14553a;
    display: flex;
    align-items: center;
    gap: 4px;
    padding-left: 6px;
}

.ribbon {
    height: 82px;
    flex: none;
    background: #f1f1f0;
    display: flex;
    position: relative;
    font-size: 10.2px;
    color: #555;
}

.rg {
    display: flex;
    flex-direction: column;
    border-right: 1px solid #dcdcdc;
    margin: 4px 0 3px;
}

.clip { width: 77px; }
.font-g { width: 183px; }
.align-g { width: 234px; }
.num-g { width: 125px; }
.styles-g { width: 161px; }
.cells-g { width: 120px; }
.edit-g { width: 116px; }
.bb-g { width: 110px; }

.rb {
    height: 63px;
    flex: none;
    display: flex;
}

.rb.col {
    flex-direction: column;
}

.rl {
    position: relative;
    text-align: center;
    font-size: 10px;
    color: #888;
    line-height: 16px;
}

.launch {
    position: absolute;
    right: 3px;
    top: 4px;
    width: 7px;
    height: 7px;
    border: 1px solid #999;
    border-width: 0 1px 1px 0;
}

.paste {
    width: 30px;
    margin-left: 12px;
    display: flex;
    flex-direction: column;
    align-items: flex-start;
    color: #aaa;
    font-size: 10px;
    line-height: 12px;
    padding-top: 2px;
}

.paste span {
    margin: 0 0 0 -1px;
}

.paste i {
    font-size: 7px;
    margin-left: 9px;
}

.clip-col {
    display: flex;
    flex-direction: column;
    justify-content: space-between;
    align-items: flex-start;
    padding: 3px 0 0 2px;
    height: 58px;
}

.clip-col > div {
    display: flex;
    align-items: center;
    gap: 3px;
}

.car {
    font-size: 8px;
    color: #666;
    font-style: normal;
    font-weight: 400;
}

.rrow {
    height: 24px;
    display: flex;
    align-items: center;
    margin-top: 4px;
}

.row-b {
    margin-top: 3px;
}

.sel {
    height: 21px;
    background: #fff;
    border: 1px solid #d8d8d8;
    display: flex;
    align-items: center;
    justify-content: space-between;
    padding: 0 3px;
    color: #444;
    font-size: 10.5px;
}

.fname {
    width: 98px;
    margin-left: 4px;
}

.fsize {
    width: 38px;
    border-left: 0;
}

.ga {
    font-size: 14px;
    margin-left: 8px;
    line-height: 14px;
    color: #555;
}

.ga.small {
    font-size: 12px;
    margin-left: 6px;
}

.ga sup {
    font-size: 8px;
    color: #2a6fb5;
    line-height: 0;
}

.font-g .row-b {
    padding-left: 5px;
    gap: 4px;
}

.b-grid {
    margin-left: -4px;
}

.fcol {
    margin-left: 3px;
}

.fbtn {
    width: 14px;
    text-align: center;
    font-size: 11px;
    color: #444;
}

.fbtn.it {
    font-style: italic;
    font-family: "Liberation Serif", serif;
    font-size: 12px;
    margin: 0 2px;
}

.rsep {
    width: 1px;
    height: 19px;
    background: #ddd;
    margin: 0 4px;
}

.align-g .rrow {
    padding-left: 7px;
    gap: 5px;
}

.align-g .rrow .rsep {
    margin: 0 3px;
}

.align-g .row-b .rsep {
    margin: 0 1px;
}

.a-on {
    background: #cfcfcf;
    padding: 4px 3px;
    margin: 0 -3px;
}

.wrap {
    display: flex;
    align-items: center;
    gap: 3px;
    white-space: nowrap;
    color: #555;
}

.numfmt {
    width: 110px;
    margin-left: 6px;
}

.num-row {
    padding-left: 11px;
    gap: 5px;
    color: #555;
}

.dollar, .pct {
    font-size: 13px;
}

.pct {
    margin-left: 8px;
}

.comma {
    font-weight: 700;
    margin: -6px 4px 0 7px;
    font-size: 13px;
}

.num-row .rsep {
    margin: 0 1px;
}

.dec {
    font-size: 7px;
    line-height: 8px;
}

.dec em {
    font-style: normal;
    color: #2a6fb5;
}

.big3 {
    justify-content: space-around;
    padding: 0 2px 0 5px;
}

.bigb {
    display: flex;
    flex-direction: column;
    align-items: center;
    text-align: center;
    line-height: 14px;
    font-size: 10px;
    white-space: nowrap;
    color: #555;
    padding: 2px 0 6px;
}

.bigb svg {
    height: 30px;
    margin-bottom: 2px;
}

.bigb span {
    margin-top: auto;
}

.edit-col {
    display: flex;
    flex-direction: column;
    justify-content: space-between;
    height: 56px;
    padding-top: 1px;
}

.edit-col > div {
    display: flex;
    align-items: center;
    gap: 4px;
}

.sigma {
    font-size: 18px;
    line-height: 16px;
    color: #444;
}

.a-red {
    font: 700 12px "Open Sans", sans-serif;
    text-anchor: middle;
    fill: #444;
}

.az {
    font: 700 13px "Open Sans", sans-serif;
}

.az.a { fill: #5d82c4; }
.az.z { fill: #9573b8; }

.bb {
    gap: 2px;
    padding-left: 6px;
    color: #555;
}

.bb > div {
    height: 19px;
    display: flex;
    align-items: center;
    gap: 3px;
    white-space: nowrap;
}

.bb > div:first-child {
    margin-top: -1px;
}

.collapse {
    position: absolute;
    right: 10px;
    bottom: 7px;
}

.fbar {
    height: 41px;
    flex: none;
    background: #e6e6e6;
    display: flex;
    align-items: center;
    padding: 1px 5px 0 5px;
    border-top: 1px solid #e0e0e0;
}

.namebox {
    width: 90px;
    height: 21px;
    background: #fff;
    display: flex;
    align-items: center;
    justify-content: space-between;
    padding: 0 6px 0 5px;
    font-size: 11px;
    color: #444;
}

.namebox i {
    font-size: 8px;
}

.fdots {
    width: 28px;
    text-align: center;
    color: #bbb;
}

.fxbox {
    width: 95px;
    height: 21px;
    background: #fff;
    display: flex;
    align-items: center;
    gap: 20px;
    padding-left: 11px;
}

.fxbox em {
    font: italic 11px "Liberation Serif", serif;
    color: #555;
}

.fxbox sub {
    font-size: 7px;
}

.finput {
    flex: 1;
    height: 21px;
    margin-left: 5px;
    background: #fff;
    display: flex;
    align-items: center;
    justify-content: flex-end;
    padding-right: 3px;
}

.sheet-wrap {
    height: 455px;
    flex: none;
    display: flex;
    background: #e4e4e4;
}

.sheet {
    width: 1258px;
    flex: none;
    margin-left: -1px;
    background: #fff;
    font-size: 10.4px;
}

.colh, .row {
    display: grid;
    grid-template-columns: var(--cols);
}

.colh {
    height: 15px;
    background: #d2d3d1;
    border-bottom: 2px solid #3f8462;
    font-size: 11px;
    line-height: 13px;
    color: #555;
    text-align: center;
}

.colh span {
    border-right: 1px solid #bfc0be;
}

.colh .corner {
    background: #e6e6e6;
}

.row {
    height: 16px;
    color: #fff;
    text-align: center;
    line-height: 15px;
}

.r1 { height: 35px; }
.r2 { height: 29px; }
.r3 { height: 30px; }
.r4 { height: 21px; }
.r5 { height: 16px; }
.r6 { height: 21px; }

.rh {
    grid-column: 1;
    background: #e6e6e6;
    color: #555;
    font-size: 11px;
    border-right: 1px solid #bfc0be;
    border-bottom: 1px solid #cfcfcf;
    display: flex;
    align-items: center;
    justify-content: center;
}

.rh.on {
    background: #d2d3d1;
}

.r1 .rh, .r2 .rh, .r3 .rh {
    align-items: flex-end;
    padding-bottom: 1px;
}

.r1 .rh {
    padding-bottom: 4px;
}

.sheet-title {
    grid-column: 6 / 9;
    font-size: 18.8px;
    font-weight: 700;
    color: #111;
    text-align: left;
    line-height: 40px;
    white-space: nowrap;
    padding-left: 4px;
    margin-left: -56px;
}

.rfa {
    grid-column: 13 / 16;
    font-size: 9px;
    font-weight: 700;
    color: #888;
    text-align: left;
    line-height: 36px;
    padding-left: 2px;
    white-space: nowrap;
}

.r1, .r2, .r3 {
    background: linear-gradient(#8b8b8b, #8b8b8b) no-repeat 968px 0 / 1px 100%;
}

.hc {
    align-self: end;
    grid-row: 1;
    color: #8a8a8a;
    line-height: 16px;
    white-space: nowrap;
    overflow: hidden;
}

.hc.left {
    text-align: left;
}

.hc.ll {
    line-height: 14px;
    padding-bottom: 1px;
    font-size: 10px;
}

.hc.mid-t {
    align-self: center;
    line-height: 16px;
}

.hc.c-q {
    align-self: start;
    text-align: left;
    padding-left: 12px;
    line-height: 16px;
}

.c-b { grid-column: 3; }
.c-c { grid-column: 4; }
.c-d { grid-column: 5; }
.c-e { grid-column: 6; padding-left: 2px; }
.c-f { grid-column: 7; }
.c-g { grid-column: 8; }
.c-h { grid-column: 9; }
.c-i { grid-column: 10; }
.c-j { grid-column: 11; }
.c-k { grid-column: 12; padding-left: 3px; }
.c-l { grid-column: 13; }
.c-m { grid-column: 14; }
.c-n { grid-column: 15; }
.c-o { grid-column: 16; }
.c-p { grid-column: 17; }
.c-q { grid-column: 18; }

.qty {
    grid-row: 1;
    color: #8a8a8a;
    border: 1px solid #222;
    border-width: 1px 1px 0 0;
    display: flex;
    align-items: flex-end;
    justify-content: center;
    line-height: 16px;
    overflow: hidden;
}

.qty.c-m {
    border-left: 1px solid #222;
}

.qty.c-q {
    justify-content: flex-start;
    padding-left: 17px;
    border-right: 0;
}

.sel-row {
    grid-column: 2 / -1;
    border: 2px solid #5c8d75;
    border-width: 2px 0;
    padding-left: 22px;
    display: block;
}

.black {
    display: block;
    height: 100%;
    background: linear-gradient(#555, #555) no-repeat 922px 0 / 1px 100%, #000;
}

.black6 {
    grid-column: 3 / -1;
    height: 19px;
    background-position: 922px 0;
}

.pk {
    grid-column: 3;
    background: #787878;
    border-right: 1px solid #ddd;
    border-bottom: 1px solid #bbb;
    color: #eee;
}

.lk {
    grid-column: 4;
    background: #787878;
    border-bottom: 1px solid #bbb;
}

.peach {
    background:
        linear-gradient(#feeee4, #feeee4) no-repeat 0 100% / 100% 1px,
        #fde2d0;
}

.pall {
    grid-column: 5 / 13;
    background:
        linear-gradient(#feeee4, #feeee4) no-repeat 0 100% / 100% 1px,
        linear-gradient(#feeadd, #feeadd) no-repeat 56px 0 / 1px 100%,
        linear-gradient(#feeadd, #feeadd) no-repeat 221px 0 / 1px 100%,
        linear-gradient(#feeadd, #feeadd) no-repeat 303px 0 / 1px 100%,
        linear-gradient(#feeadd, #feeadd) no-repeat 364px 0 / 1px 100%,
        linear-gradient(#feeadd, #feeadd) no-repeat 431px 0 / 1px 100%,
        linear-gradient(#feeadd, #feeadd) no-repeat 536px 0 / 1px 100%,
        linear-gradient(#feeadd, #feeadd) no-repeat 596px 0 / 1px 100%,
        #fde2d0;
}

.p5a {
    grid-column: 5 / 10;
}

.p5b {
    grid-column: 12;
}

.vl {
    grid-column: 13;
    border-left: 1px solid #8b8b8b;
}

.vscroll {
    width: 17px;
    margin-left: 3px;
    display: flex;
    flex-direction: column;
    align-items: center;
    padding-top: 2px;
    background: #d9d9d9;
}

.va {
    width: 15px;
    height: 14px;
    background: #fff;
    font-size: 9px;
    line-height: 13px;
    text-align: center;
    color: #666;
}

.vthumb {
    width: 15px;
    height: 86px;
    background: #fff;
    border-top: 1px solid #ccc;
}

.vfill {
    flex: 1;
}

.sheet-tabs {
    height: 27px;
    flex: none;
    position: relative;
    background: #efefee;
    border-top: 1px solid #8e8e8e;
    display: flex;
    align-items: center;
    font-size: 11px;
}

.nav-arrows {
    width: 91px;
    padding-left: 20px;
    color: #bbb;
    font-size: 13px;
}

.stab {
    height: 21px;
    margin-top: 1px;
    text-align: center;
    line-height: 18px;
}

.t-info {
    width: 80px;
    background: #fdb000;
    color: #444;
}

.t-cur {
    width: 131px;
    margin: 0 5px;
    height: 20px;
    background: #e5f1e8;
    color: #1c6441;
    font-weight: 600;
    box-shadow: 0 0 0 1px #e5f1e8, 0 0 0 4px #f4343c, 0 4px 5px 4px rgba(0, 0, 0, 0.2);
    border-bottom: 1px solid #2b7250;
}

.t-start {
    width: 107px;
    background: #4d8dd6;
    color: #123;
}

.t-data {
    width: 88px;
    margin-left: 5px;
    background: #000;
    color: #fff;
}

.t-add {
    margin-left: 32px;
}

.hdots {
    margin-left: 203px;
    color: #aaa;
}

.hscroll {
    display: flex;
    align-items: center;
    width: 476px;
    margin-left: 9px;
    height: 13px;
    background: #d8d8d8;
}

.ha {
    width: 13px;
    height: 13px;
    background: #fff;
    border: 1px solid #ccc;
    font-size: 8px;
    line-height: 11px;
    text-align: center;
    color: #444;
    flex: none;
}

.hthumb {
    width: 18px;
    height: 13px;
    margin-left: 1px;
    background: #fff;
    flex: none;
}

.htrack {
    flex: 1;
}

.xl-status {
    height: 18px;
    flex: 1;
    background: #efefee;
    display: flex;
    align-items: center;
    font-size: 10px;
    color: #666;
}

.ready {
    padding-left: 9px;
    margin-right: auto;
}

.count {
    margin-right: 17px;
}

.view {
    width: 34px;
    height: 100%;
    display: flex;
    align-items: center;
    justify-content: center;
}

.view.on {
    background: #d2d3d1;
}

.zoom {
    display: flex;
    align-items: center;
    gap: 5px;
    margin-left: 6px;
    font-size: 12px;
}

.zline {
    position: relative;
    width: 85px;
    height: 1px;
    background: #aaa;
}

.zline i {
    position: absolute;
    left: 38px;
    top: -5px;
    width: 3px;
    height: 11px;
    background: #444;
}

.pctz {
    margin: 0 17px 0 14px;
}

.cur-arrow {
    position: absolute;
}

.a1 {
    left: 705px;
    top: 572px;
}

.a2 {
    left: 1487px;
    top: 758px;
}

.cur-cross {
    position: absolute;
    left: 927px;
    top: 481px;
}
```
